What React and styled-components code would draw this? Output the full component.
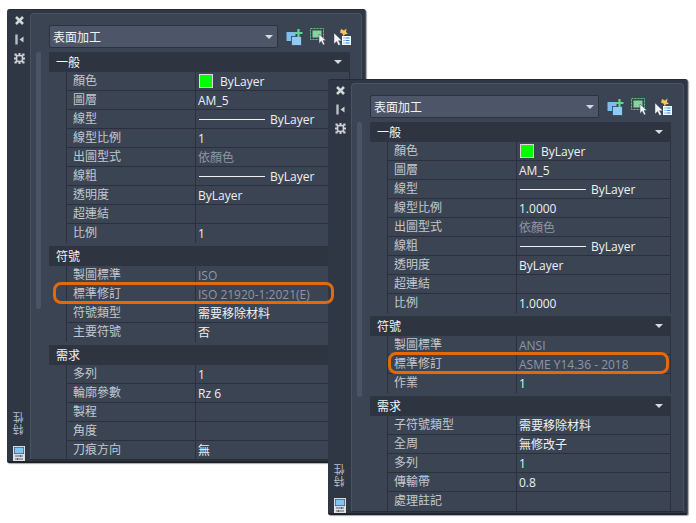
import React from 'react';
import styled, { createGlobalStyle } from 'styled-components';

const Global = createGlobalStyle`
  html, body { margin: 0; padding: 0; background: #fff; }
  #root { width: 696px; height: 523px; position: relative; overflow: hidden; }
  * { box-sizing: border-box; }
`;
const FONT = `"Open Sans", "Noto Sans CJK TC", sans-serif`;

const Desktop = styled.div`
  position: relative; width: 696px; height: 523px; background: #fff;
  font-family: ${FONT}; font-size: 12px;
`;
const Palette = styled.section`
  position: absolute; left: ${p => p.$x}px; top: ${p => p.$y}px;
  width: ${p => p.$w}px; height: ${p => p.$h}px;
  display: flex; background: #2f3644; border-radius: 3px 3px 2px 2px;
  border-bottom: 2px solid #1e222b; border-right: 1px solid #4a5261; border-top: 1px solid #262b36;
  box-shadow: 1px 1px 1px rgba(0,0,0,.35);
`;
const Strip = styled.aside`
  width: 22px; flex: none; display: flex; flex-direction: column; align-items: center;
  padding: 5px 0 0 2px; color: #d5d8dc;
`;
const StripIcon = styled.svg`
  width: 11px; height: 11px; margin-bottom: 8px; display: block;
`;
const VerticalTitle = styled.div`
  margin-top: auto; margin-bottom: 11px; writing-mode: vertical-rl; transform: rotate(180deg);
  font-size: 11px; line-height: 12px; color: #b9bec6; letter-spacing: 1px;
`;
const Inner = styled.div`
  flex: 1; min-width: 0; margin: 3px 3px 1px 1px; background: #3b4453;
  border: 1px solid #4a5361; border-bottom: 1px solid #262b35; border-radius: 4px 4px 2px 2px;
  display: flex; flex-direction: column; overflow: hidden;
`;
const Toolbar = styled.div`
  display: flex; align-items: flex-start; height: 38px; flex: none; padding: 11px 0 0 18px;
`;
const Combo = styled.div`
  width: 229px; height: 23px; flex: none; display: flex; align-items: center; justify-content: space-between;
  padding: 0 4px 0 3px; background: #4c5668; border: 1px solid #2c3240; border-radius: 2px;
  color: #f2f3f5; font-size: 12px;
`;
const Caret = styled.span`
  display: block; width: 0; height: 0; border-left: 4.5px solid transparent; border-right: 4.5px solid transparent;
  border-top: 4.5px solid #d7dade;
`;
const Tools = styled.div`
  display: flex; align-items: center; gap: 7px; margin: 3px 0 0 8px;
`;
const ToolIcon = styled.svg`
  width: 17px; height: 18px; flex: none; display: block;
`;
const Body = styled.div`
  flex: 1; min-height: 0; display: flex; padding: 0 0 0 5px;
`;
const Scroll = styled.div`
  width: 5px; height: ${p => p.$h}px; flex: none; margin-right: 8px; background: #4b5465; border-radius: 2px;
`;
const Sections = styled.div`
  width: 301px; flex: none; display: flex; flex-direction: column; gap: 3px;
`;
const Group = styled.div`
  display: flex; flex-direction: column;
`;
const GroupHead = styled.header`
  height: 20px; display: flex; align-items: center; justify-content: space-between;
  background: #2e3440; padding: 0 8px 0 7px; color: #f2f3f5; font-size: 12px;
`;
const Row = styled.div`
  margin-left: 17px; height: 19px; display: grid; grid-template-columns: 129px 1fr;
  border-bottom: 1px solid #2b303c; border-left: 1px solid #2b303c; border-right: 1px solid #2b303c;
  &:last-child { border-bottom: 0; }
`;
const Label = styled.div`
  padding-left: 6px; line-height: 18px; color: #c3c8cf; border-right: 1px solid #2b303c; white-space: nowrap; overflow: hidden;
`;
const Value = styled.div`
  padding-left: 2px; display: flex; align-items: center; height: 18px;
  color: ${p => (p.$dim ? '#8e96a3' : '#eef0f2')}; white-space: nowrap; overflow: hidden;
`;
const Swatch = styled.span`
  width: 14px; height: 14px; margin: 0 7px 0 1px; background: #00ff00; border: 1px solid #d9dcdf; flex: none;
`;
const LineSample = styled.span`
  width: 66px; height: 1px; background: #f0f0f0; margin: 0 5px 0 1px; flex: none;
`;
const Highlight = styled.div`
  position: absolute; left: ${p => p.$x}px; top: ${p => p.$y}px; width: ${p => p.$w}px; height: ${p => p.$h}px;
  border: 3px solid #e36a08; border-radius: 8px; pointer-events: none;
`;

const CloseIcon = () => (
  <StripIcon viewBox="0 0 11 11"><path d="M2 2l7 7M9 2l-7 7" stroke="#d3d6da" strokeWidth="2.6" /></StripIcon>
);
const PinIcon = () => (
  <StripIcon viewBox="0 0 11 11"><path d="M2.5 0.5v10" stroke="#b9bdc4" strokeWidth="2.4" /><path d="M9.5 2.5v6L5.5 5.5z" fill="#c9cdd2" /></StripIcon>
);
const GearIcon = () => (
  <StripIcon viewBox="0 0 11 11">
    <rect x="2.6" y="2.6" width="5.8" height="5.8" fill="none" stroke="#cfd2d6" strokeWidth="1.6" />
    <path d="M.5 .5h2.2v2.2H.5zM8.3 .5h2.2v2.2H8.3zM.5 8.3h2.2v2.2H.5zM8.3 8.3h2.2v2.2H8.3zM4.5 0h2v2h-2zM4.5 9h2v2h-2zM0 4.5h2v2H0zM9 4.5h2v2H9z" fill="#cfd2d6" />
  </StripIcon>
);
const PropsIcon = () => (
  <svg width="12" height="15" viewBox="0 0 12 15" style={{ display: 'block' }}>
    <rect width="12" height="15" fill="#dfe2e5" />
    <rect x="1.3" y="1.3" width="9.4" height="6.4" fill="#7ec4f5" stroke="#39506a" strokeWidth=".7" />
    <path d="M2 10h8M2 13h8" stroke="#59606c" />
    <path d="M7.5 9v2M4.5 12v2" stroke="#59606c" />
  </svg>
);
const AddIcon = () => (
  <ToolIcon viewBox="0 0 17 18">
    <rect x="0.5" y="4" width="9" height="9" fill="#7cbdf2" />
    <rect x="5.5" y="8.5" width="10" height="9" fill="#8fcbf7" stroke="#3b4453" strokeWidth=".8" />
    <path d="M12.5 1v8M8.5 5h8" stroke="#5fd68a" strokeWidth="2.2" />
  </ToolIcon>
);
const SelectIcon = () => (
  <ToolIcon viewBox="0 0 17 18">
    <rect x="0.5" y="0.5" width="13" height="11" fill="none" stroke="#63c784" strokeDasharray="2 1" />
    <rect x="2.5" y="2.5" width="9" height="7" fill="#86d2a0" />
    <path d="M9 6l0 9.5 2.3-2.2 1.7 3.7 1.8-.8-1.7-3.6H16z" fill="#f4f5f6" stroke="#3b4453" strokeWidth=".5" />
  </ToolIcon>
);
const QuickIcon = () => (
  <ToolIcon viewBox="0 0 17 18">
    <path d="M7 1l3 1.5L12.5.5 12 4l2 2-3 .3-1.5 2-.8-2.6L6 4.5z" fill="#f3c55a" />
    <path d="M0 5v11l2.5-2.5 2 4 2-1-2-3.8H8z" fill="#f4f5f6" stroke="#3b4453" strokeWidth=".4" />
    <rect x="8" y="8" width="9" height="9" fill="#f7f8f9" />
    <path d="M9.5 10h1M11.5 10h4M9.5 12.5h1M11.5 12.5h4M9.5 15h1M11.5 15h4" stroke="#2f86d6" />
  </ToolIcon>
);

const left = {
  x: 7, y: 9, w: 359, h: 454, scroll: 257,
  groups: [
    { title: '一般', rows: [
      { l: '顏色', v: 'ByLayer', swatch: true }, { l: '圖層', v: 'AM_5' }, { l: '線型', v: 'ByLayer', line: true },
      { l: '線型比例', v: '1' }, { l: '出圖型式', v: '依顏色', dim: true }, { l: '線粗', v: 'ByLayer', line: true },
      { l: '透明度', v: 'ByLayer' }, { l: '超連結', v: '' }, { l: '比例', v: '1' } ] },
    { title: '符號', rows: [
      { l: '製圖標準', v: 'ISO', dim: true }, { l: '標準修訂', v: 'ISO 21920-1:2021(E)', dim: true },
      { l: '符號類型', v: '需要移除材料' }, { l: '主要符號', v: '否' } ] },
    { title: '需求', rows: [
      { l: '多列', v: '1' }, { l: '輪廓參數', v: 'Rz 6' }, { l: '製程', v: '' }, { l: '角度', v: '' }, { l: '刀痕方向', v: '無' } ] },
  ],
};
const right = {
  x: 328, y: 79, w: 360, h: 436, scroll: 275,
  groups: [
    { title: '一般', rows: [
      { l: '顏色', v: 'ByLayer', swatch: true }, { l: '圖層', v: 'AM_5' }, { l: '線型', v: 'ByLayer', line: true },
      { l: '線型比例', v: '1.0000' }, { l: '出圖型式', v: '依顏色', dim: true }, { l: '線粗', v: 'ByLayer', line: true },
      { l: '透明度', v: 'ByLayer' }, { l: '超連結', v: '' }, { l: '比例', v: '1.0000' } ] },
    { title: '符號', rows: [
      { l: '製圖標準', v: 'ANSI', dim: true }, { l: '標準修訂', v: 'ASME Y14.36 - 2018', dim: true }, { l: '作業', v: '1' } ] },
    { title: '需求', rows: [
      { l: '子符號類型', v: '需要移除材料' }, { l: '全周', v: '無修改子' }, { l: '多列', v: '1' }, { l: '傳輸帶', v: '0.8' }, { l: '處理註記', v: '' } ] },
  ],
};

function PropertyPalette({ data }) {
  return (
    <Palette $x={data.x} $y={data.y} $w={data.w} $h={data.h}>
      <Strip>
        <CloseIcon /><PinIcon /><GearIcon />
        <VerticalTitle>特性</VerticalTitle>
        <PropsIcon />
      </Strip>
      <Inner>
        <Toolbar>
          <Combo>表面加工<Caret /></Combo>
          <Tools><AddIcon /><SelectIcon /><QuickIcon /></Tools>
        </Toolbar>
        <Body>
          <Scroll $h={data.scroll} />
          <Sections>
            {data.groups.map(g => (
              <Group key={g.title}>
                <GroupHead>{g.title}<Caret /></GroupHead>
                {g.rows.map(r => (
                  <Row key={r.l}>
                    <Label>{r.l}</Label>
                    <Value $dim={r.dim}>
                      {r.swatch && <Swatch />}
                      {r.line && <LineSample />}
                      {r.v}
                    </Value>
                  </Row>
                ))}
              </Group>
            ))}
          </Sections>
        </Body>
      </Inner>
    </Palette>
  );
}

export default function App() {
  return (
    <Desktop>
      <Global />
      <PropertyPalette data={left} />
      <PropertyPalette data={right} />
      <Highlight $x={53} $y={282} $w={281} $h={22} />
      <Highlight $x={388} $y={352} $w={281} $h={22} />
    </Desktop>
  );
}
